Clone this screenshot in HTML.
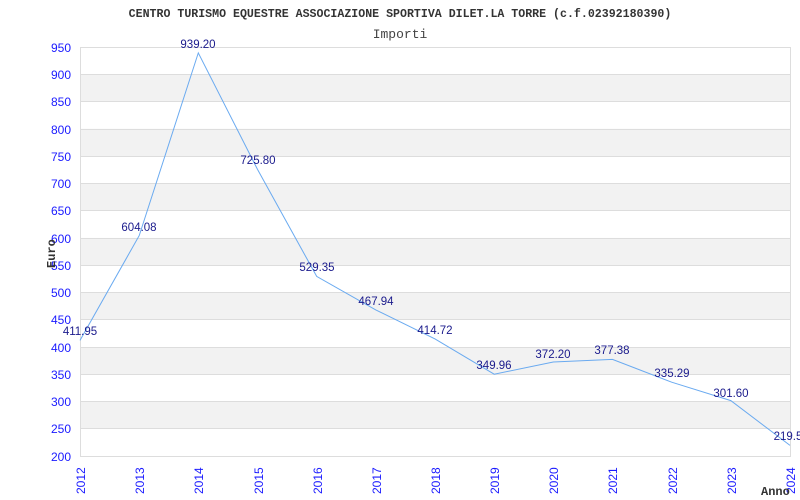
<!DOCTYPE html>
<html><head><meta charset="utf-8"><style>
html,body{margin:0;padding:0;background:#fff;width:800px;height:500px;overflow:hidden}
</style></head><body>
<svg width="800" height="500" xmlns="http://www.w3.org/2000/svg">
<rect width="800" height="500" fill="#fff"/>
<text x="400" y="17" text-anchor="middle" font-family="Liberation Mono, monospace" font-size="11.6" font-weight="bold" fill="#333">CENTRO TURISMO EQUESTRE ASSOCIAZIONE SPORTIVA DILET.LA TORRE (c.f.02392180390)</text>
<text x="400" y="38" text-anchor="middle" font-family="Liberation Mono, monospace" font-size="13" fill="#444">Importi</text>
<g fill="#f2f2f2">
<rect x="81" y="74.3" width="709" height="27.3"/>
<rect x="81" y="128.8" width="709" height="27.3"/>
<rect x="81" y="183.3" width="709" height="27.3"/>
<rect x="81" y="237.9" width="709" height="27.3"/>
<rect x="81" y="292.4" width="709" height="27.3"/>
<rect x="81" y="347" width="709" height="27.3"/>
<rect x="81" y="401.5" width="709" height="27.3"/>
</g>
<g stroke="#ddd" stroke-width="1">
<line x1="80" y1="47.5" x2="790" y2="47.5"/><line x1="80" y1="74.5" x2="790" y2="74.5"/><line x1="80" y1="101.5" x2="790" y2="101.5"/><line x1="80" y1="129.5" x2="790" y2="129.5"/><line x1="80" y1="156.5" x2="790" y2="156.5"/><line x1="80" y1="183.5" x2="790" y2="183.5"/><line x1="80" y1="210.5" x2="790" y2="210.5"/><line x1="80" y1="238.5" x2="790" y2="238.5"/><line x1="80" y1="265.5" x2="790" y2="265.5"/><line x1="80" y1="292.5" x2="790" y2="292.5"/><line x1="80" y1="319.5" x2="790" y2="319.5"/><line x1="80" y1="347.5" x2="790" y2="347.5"/><line x1="80" y1="374.5" x2="790" y2="374.5"/><line x1="80" y1="401.5" x2="790" y2="401.5"/><line x1="80" y1="428.5" x2="790" y2="428.5"/><line x1="80" y1="456.5" x2="790" y2="456.5"/>
<line x1="80.5" y1="47" x2="80.5" y2="457"/><line x1="790.5" y1="47" x2="790.5" y2="457"/>
</g>
<g font-family="Liberation Sans, sans-serif" font-size="12" fill="#1a1aff" text-anchor="end">
<text x="71" y="52">950</text><text x="71" y="79">900</text><text x="71" y="106">850</text><text x="71" y="134">800</text><text x="71" y="161">750</text><text x="71" y="188">700</text><text x="71" y="215">650</text><text x="71" y="243">600</text><text x="71" y="270">550</text><text x="71" y="297">500</text><text x="71" y="324">450</text><text x="71" y="352">400</text><text x="71" y="379">350</text><text x="71" y="406">300</text><text x="71" y="433">250</text><text x="71" y="461">200</text>
</g>
<g font-family="Liberation Sans, sans-serif" font-size="12" fill="#1a1aff">
<text transform="translate(85,494) rotate(-90)">2012</text>
<text transform="translate(144,494) rotate(-90)">2013</text>
<text transform="translate(203,494) rotate(-90)">2014</text>
<text transform="translate(263,494) rotate(-90)">2015</text>
<text transform="translate(322,494) rotate(-90)">2016</text>
<text transform="translate(381,494) rotate(-90)">2017</text>
<text transform="translate(440,494) rotate(-90)">2018</text>
<text transform="translate(499,494) rotate(-90)">2019</text>
<text transform="translate(558,494) rotate(-90)">2020</text>
<text transform="translate(617,494) rotate(-90)">2021</text>
<text transform="translate(677,494) rotate(-90)">2022</text>
<text transform="translate(736,494) rotate(-90)">2023</text>
<text transform="translate(795,494) rotate(-90)">2024</text>
</g>
<text transform="translate(55,268) rotate(-90)" font-family="Liberation Mono, monospace" font-size="12" font-weight="bold" fill="#333">Euro</text>
<text x="761" y="495" font-family="Liberation Mono, monospace" font-size="12" font-weight="bold" fill="#333">Anno</text>
<polyline fill="none" stroke="#6aaaf0" stroke-width="1" points="80,340.4 139.2,235.6 198.3,52.9 257.5,169.4 316.7,276.4 375.8,309.9 435,338.9 494.2,374.2 553.3,362 612.5,359.4 671.7,382.2 730.8,400.6 790,445.4"/>
<g font-family="Liberation Sans, sans-serif" font-size="11.5" fill="#1a1a8c" text-anchor="middle">
<text x="80" y="335">411.95</text>
<text x="139" y="231">604.08</text>
<text x="198" y="48">939.20</text>
<text x="258" y="164">725.80</text>
<text x="317" y="271">529.35</text>
<text x="376" y="305">467.94</text>
<text x="435" y="334">414.72</text>
<text x="494" y="369">349.96</text>
<text x="553" y="358">372.20</text>
<text x="612" y="354">377.38</text>
<text x="672" y="377">335.29</text>
<text x="731" y="397">301.60</text>
<text x="788" y="440">219.5</text>
</g>
</svg>
</body></html>
